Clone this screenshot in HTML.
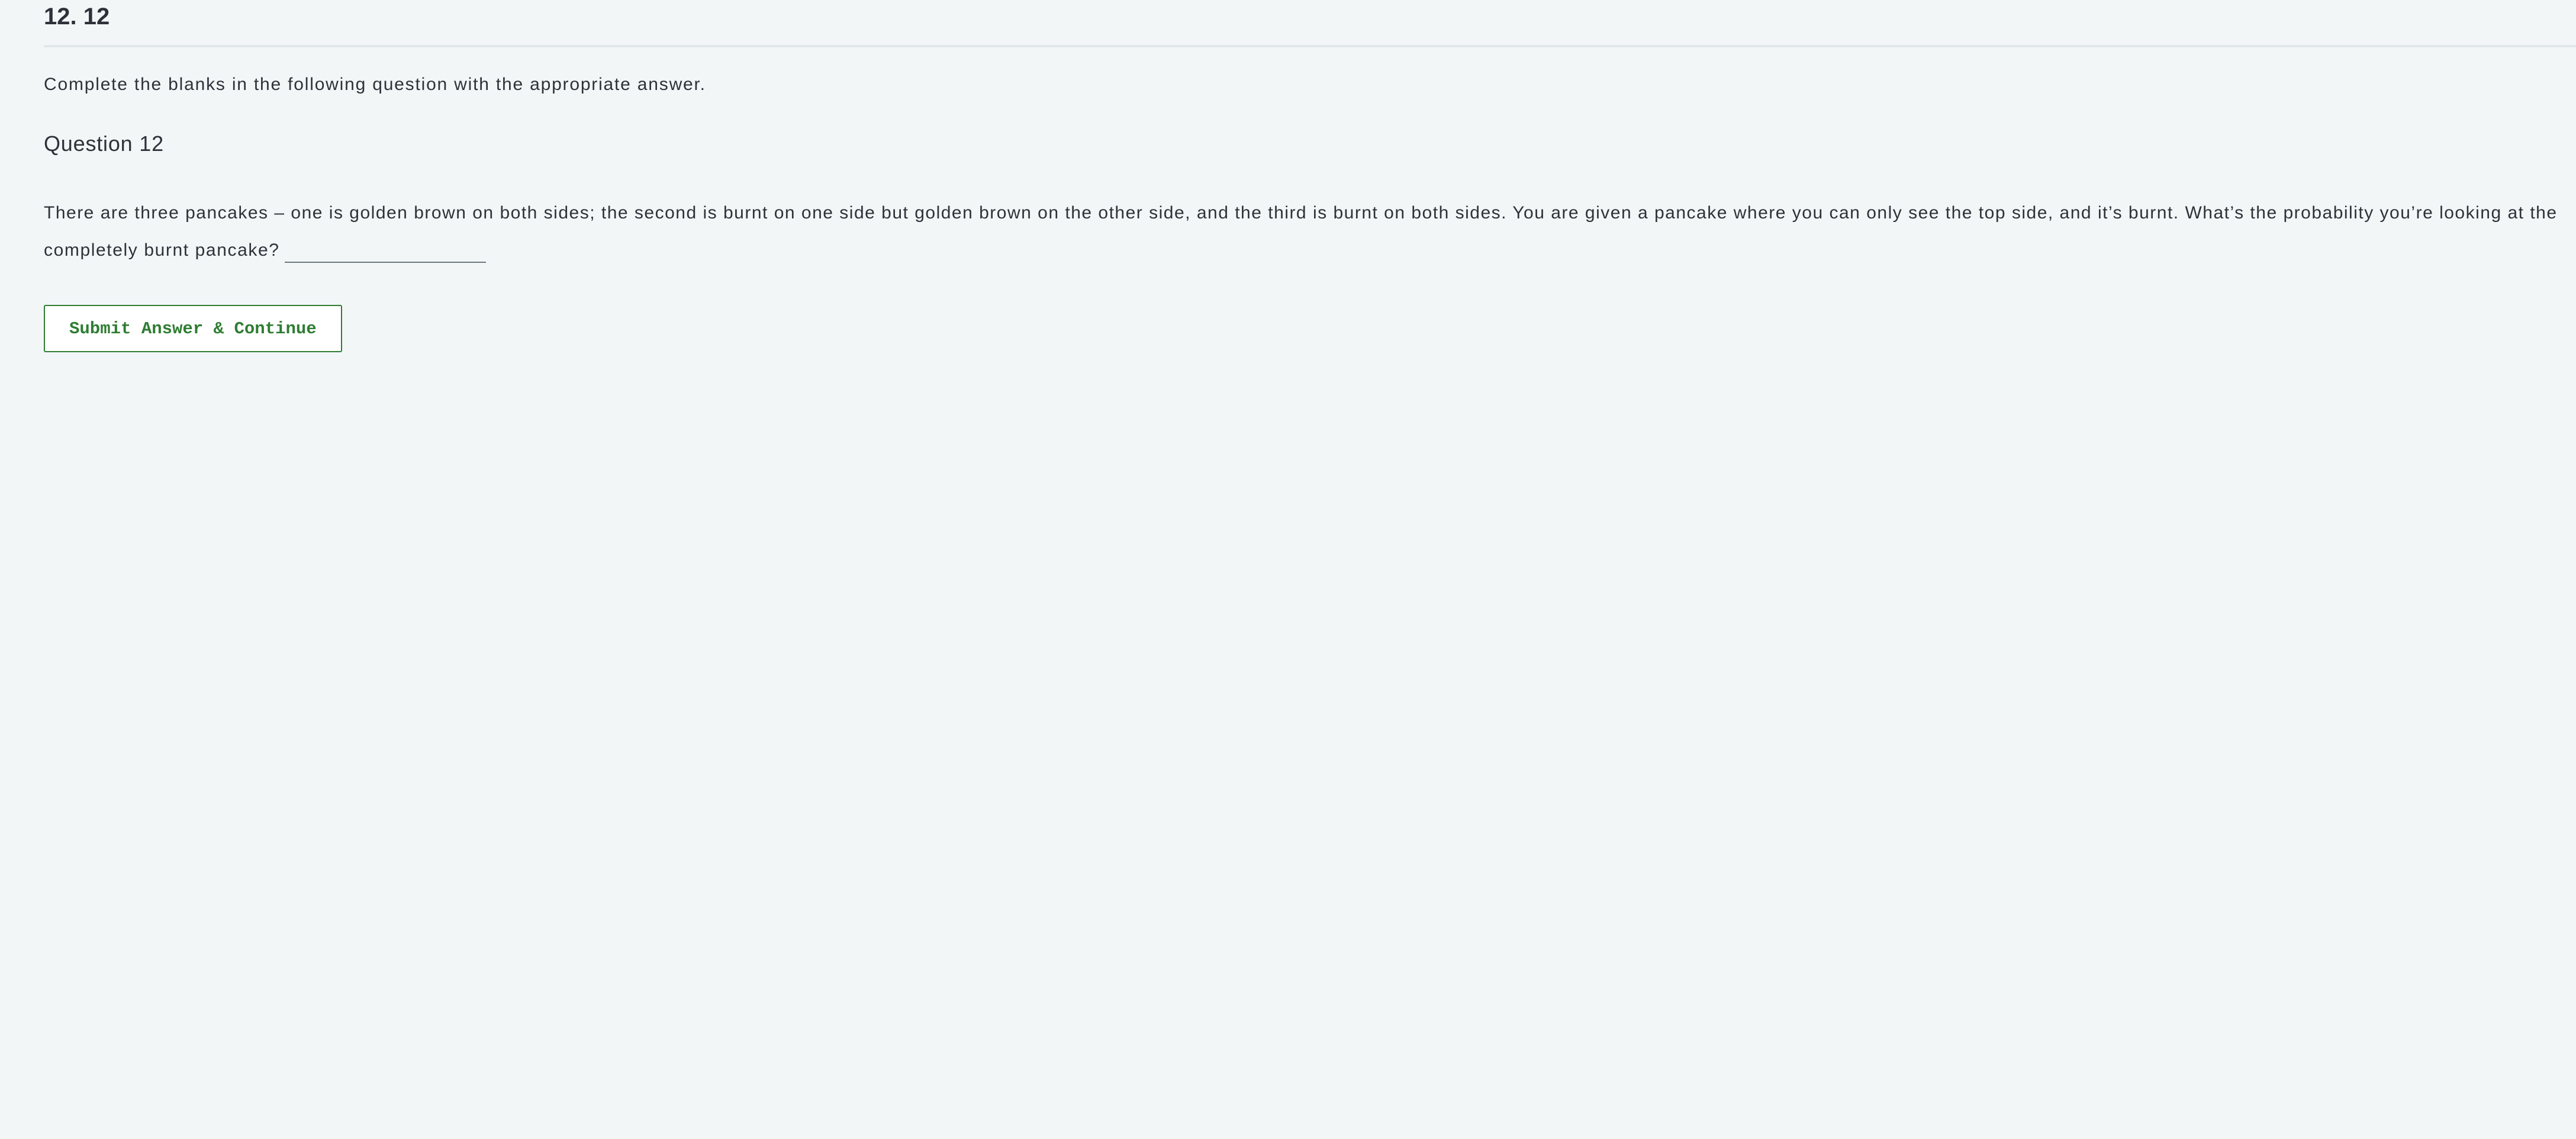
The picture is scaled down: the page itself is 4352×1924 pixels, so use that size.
<!DOCTYPE html>
<html><head><meta charset="utf-8"><style>
html,body{margin:0;padding:0;}
body{width:4352px;height:1924px;background:#f2f6f7;color:#2d3239;font-family:"Liberation Sans",sans-serif;position:relative;overflow:hidden;}
.a{position:absolute;left:74px;white-space:nowrap;}
h1{position:absolute;left:74px;top:0;margin:0;font-size:40px;font-weight:bold;line-height:56px;}
.hr{position:absolute;left:74px;right:0;top:76px;height:4px;background:#e2e8ea;}
.t{font-size:30px;}
.blank{display:inline-block;width:340px;border-bottom:2px solid #6c7a80;height:40px;vertical-align:-12px;margin-left:8px;}
.btn{position:absolute;left:74px;top:515px;width:500px;height:76px;border:2px solid #2e7d32;border-radius:3px;background:#fff;box-sizing:content-box;}
.btn span{position:absolute;left:41px;top:22px;font-family:"Liberation Mono",monospace;font-weight:bold;font-size:29px;color:#2e7d32;line-height:34px;}
</style></head><body>
<h1>12. 12</h1>
<div class="hr"></div>
<div class="a t" style="top:121px;line-height:44px;letter-spacing:1.8px;">Complete the blanks in the following question with the appropriate answer.</div>
<div class="a" style="top:219px;font-size:36px;line-height:48px;letter-spacing:0.8px;">Question 12</div>
<div class="a t" style="top:338px;line-height:44px;letter-spacing:1.5px;">There are three pancakes – one is golden brown on both sides; the second is burnt on one side but golden brown on the other side, and the third is burnt on both sides. You are given a pancake where you can only see the top side, and it’s burnt. What’s the probability you’re looking at the</div>
<div class="a t" style="top:401px;line-height:44px;letter-spacing:1.6px;">completely burnt pancake?<span class="blank"></span></div>
<div class="btn"><span>Submit Answer &amp; Continue</span></div>
</body></html>
